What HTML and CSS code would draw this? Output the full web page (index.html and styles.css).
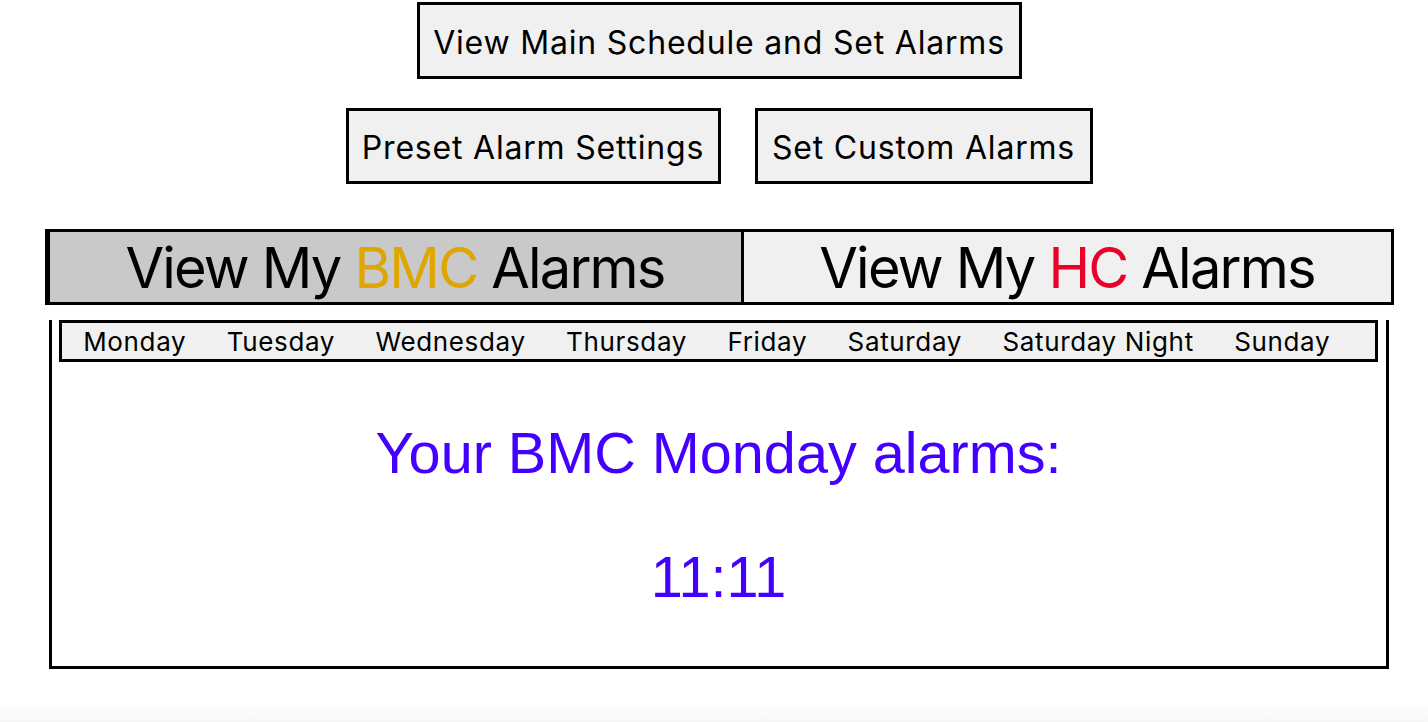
FILE: index.html
```html
<!DOCTYPE html>
<html>
<head>
<meta charset="utf-8">
<title>Alarms</title>
<link rel="stylesheet" href="styles.css">
</head>
<body>
<div class="page">
  <div class="nav-row">
    <button class="nav-btn btn-main">View Main Schedule and Set Alarms</button>
  </div>
  <div class="nav-row second">
    <button class="nav-btn btn-preset">Preset Alarm Settings</button>
    <button class="nav-btn btn-custom">Set Custom Alarms</button>
  </div>
  <div class="tabs">
    <div class="tab tab-bmc active">View My <span class="bmc">BMC</span> Alarms</div>
    <div class="tab tab-hc">View My <span class="hc">HC</span> Alarms</div>
  </div>
  <div class="panel">
    <div class="days">
      <span class="day">Monday</span>
      <span class="day">Tuesday</span>
      <span class="day">Wednesday</span>
      <span class="day">Thursday</span>
      <span class="day">Friday</span>
      <span class="day">Saturday</span>
      <span class="day">Saturday Night</span>
      <span class="day">Sunday</span>
    </div>
    <div class="alarm-title">Your BMC Monday alarms:</div>
    <div class="alarm-time">11:11</div>
  </div>
  <div class="fade"></div>
</div>
</body>
</html>
```

FILE: styles.css
```css
html, body {
  margin: 0;
  padding: 0;
  background: #ffffff;
}

body {
  font-family: "Inter", "Roboto", "Liberation Sans", sans-serif;
  color: #000;
  overflow: hidden;
}

.page {
  padding: 2px 34px 0 44px;
}

.nav-row {
  display: flex;
  justify-content: center;
  gap: 34px;
}

.nav-row.second {
  margin-top: 29px;
}

.nav-btn {
  box-sizing: border-box;
  background: #f0f0f0;
  border: 3px solid #000;
  font-family: inherit;
  font-size: 32px;
  letter-spacing: 0.8px;
  color: #000;
  padding: 3px 0 0;
  margin: 0;
  text-align: center;
  white-space: nowrap;
}

.btn-main {
  width: 605px;
  height: 77px;
}

.btn-preset {
  width: 375px;
  height: 76px;
}

.btn-custom {
  width: 338px;
  height: 76px;
}

.tabs {
  display: flex;
  justify-content: center;
  margin-top: 45px;
}

.tab {
  box-sizing: border-box;
  height: 76px;
  font-size: 56px;
  letter-spacing: -1.8px;
  line-height: 72px;
  text-align: center;
  border: 3px solid #000;
  white-space: nowrap;
}

.tab-bmc {
  width: 696px;
  background: #c9c9c9;
  border-left-width: 5px;
  border-right: none;
}

.tab-hc {
  width: 653px;
  background: #f0f0f0;
}

.bmc {
  color: #e0a600;
}

.hc {
  color: #ea0029;
}

.panel {
  box-sizing: border-box;
  width: 1340px;
  margin: 15px auto 0;
  border: 3px solid #000;
  border-top: none;
  padding: 0 8px 56px 7px;
}

.days {
  box-sizing: border-box;
  height: 42px;
  border: 3px solid #000;
  background: #f0f0f0;
  display: flex;
  align-items: center;
  padding-left: 1px;
}

.day {
  font-size: 26px;
  letter-spacing: 0.65px;
  padding: 0 20.2px;
  white-space: nowrap;
}

.alarm-title,
.alarm-time {
  font-family: "Liberation Sans", Arial, sans-serif;
  font-size: 57.6px;
  line-height: 66px;
  color: #4400ff;
  text-align: center;
}

.alarm-title {
  margin-top: 58px;
}

.alarm-time {
  margin-top: 58px;
}

.fade {
  margin: 31px -34px 0 -44px;
  height: 22px;
  background: linear-gradient(#ffffff, #f7f7f7);
}
```
